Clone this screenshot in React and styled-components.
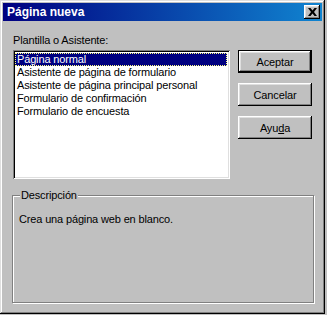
import React from 'react'
import styled, { createGlobalStyle } from 'styled-components'

const GlobalStyle = createGlobalStyle`
  body {
    margin: 0;
    background: #c0c0c0;
    font-family: "Liberation Sans", Arial, sans-serif;
    font-size: 11px;
    letter-spacing: -0.15px;
    color: #000;
  }
`

const raised = `
  box-shadow: inset -1px -1px #000, inset 1px 1px #fff,
    inset -2px -2px #808080, inset 2px 2px #dfdfdf;
`

const Window = styled.div`
  width: 325px;
  height: 314px;
  box-sizing: border-box;
  padding: 3px;
  background: #c0c0c0;
  box-shadow: inset -1px -1px #000, inset 1px 1px #dfdfdf,
    inset -2px -2px #808080, inset 2px 2px #fff;
  display: flex;
  flex-direction: column;
`

const TitleBar = styled.div`
  height: 18px;
  flex: none;
  display: flex;
  align-items: center;
  justify-content: space-between;
  padding: 0 2px 0 4px;
  background: linear-gradient(to right, #000080, #1084d0);
  color: #fff;
  font-weight: bold;
  font-size: 12px;
  letter-spacing: 0;
`

const CloseButton = styled.div`
  width: 16px;
  height: 14px;
  background: #c0c0c0;
  display: flex;
  align-items: center;
  justify-content: center;
  ${raised}
`

const Body = styled.div`
  flex: 1;
  display: flex;
  flex-direction: column;
  padding: 13px 8px 8px 9px;
`

const TopRow = styled.div`
  display: flex;
  gap: 8px;
  margin-left: 1px;
`

const LeftColumn = styled.div`
  width: 217px;
  display: flex;
  flex-direction: column;
`

const Label = styled.div`
  line-height: 13px;
  margin-bottom: 3px;
`

const ListBox = styled.div`
  height: 129px;
  box-sizing: border-box;
  padding: 3px 2px 2px;
  background: #fff;
  box-shadow: inset 1px 1px #808080, inset -1px -1px #fff,
    inset 2px 2px #000, inset -2px -2px #dfdfdf;
`

const Item = styled.div`
  height: 13px;
  line-height: 13px;
  padding-left: 2px;
  margin-right: 1px;
  white-space: nowrap;
  overflow: hidden;
  box-sizing: border-box;
  background: ${p => (p.$selected ? '#000080' : 'transparent')};
  color: ${p => (p.$selected ? '#fff' : '#000')};
  outline: ${p => (p.$selected ? '1px dotted #ffff80' : 'none')};
  outline-offset: -1px;
`

const ButtonColumn = styled.div`
  display: flex;
  flex-direction: column;
  gap: 10px;
  padding-top: 16px;
`

const Button = styled.div`
  width: 74px;
  height: 23px;
  box-sizing: border-box;
  display: flex;
  align-items: center;
  justify-content: center;
  background: #c0c0c0;
  ${p =>
    p.$default
      ? `border: 1px solid #000;
         box-shadow: inset -1px -1px #000, inset 1px 1px #fff,
           inset -2px -2px #808080, inset 2px 2px #dfdfdf;`
      : raised}
`

const Group = styled.fieldset`
  flex: 1;
  min-width: 0;
  margin: 10px 0 0;
  padding: 11px 6px 0;
  border: 1px solid #808080;
  box-shadow: inset 1px 1px #fff, 1px 1px #fff;
`

const Legend = styled.legend`
  margin-left: 1px;
  padding: 0 1px;
  line-height: 13px;
  background: #c0c0c0;
`

const Description = styled.div`
  line-height: 13px;
`

const items = [
  'Página normal',
  'Asistente de página de formulario',
  'Asistente de página principal personal',
  'Formulario de confirmación',
  'Formulario de encuesta',
]

export default function App() {
  return (
    <>
      <GlobalStyle />
      <Window>
        <TitleBar>
          <span>Página nueva</span>
          <CloseButton>
            <svg width="9" height="8" viewBox="0 0 9 8">
              <path d="M0 0h2.5L4.5 2.5 6.5 0H9L6 4l3 4H6.5L4.5 5.5 2.5 8H0l3-4z" fill="#000" />
            </svg>
          </CloseButton>
        </TitleBar>
        <Body>
          <TopRow>
            <LeftColumn>
              <Label>Plantilla o Asistente:</Label>
              <ListBox>
                {items.map((t, i) => (
                  <Item key={t} $selected={i === 0}>{t}</Item>
                ))}
              </ListBox>
            </LeftColumn>
            <ButtonColumn>
              <Button $default>Aceptar</Button>
              <Button>Cancelar</Button>
              <Button>Ayu<u>d</u>a</Button>
            </ButtonColumn>
          </TopRow>
          <Group>
            <Legend>Descripción</Legend>
            <Description>Crea una página web en blanco.</Description>
          </Group>
        </Body>
      </Window>
    </>
  )
}
